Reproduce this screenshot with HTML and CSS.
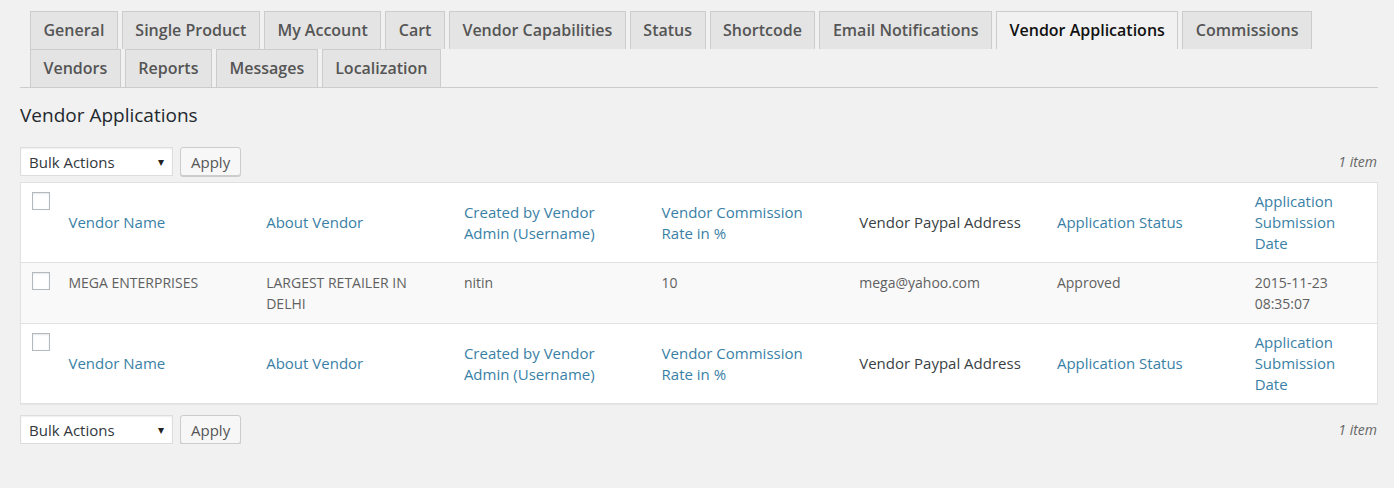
FILE: index.html
```html
<!DOCTYPE html>
<html lang="en">
<head>
    <meta charset="UTF-8">
    <title>Vendor Applications</title>
    <link rel="stylesheet" href="styles.css">
</head>
<body>
    <div class="wrap">
        <!-- settings tabs -->
        <nav class="nav-tabs">
            <a class="nav-tab" href="#">General</a>
            <a class="nav-tab" href="#">Single Product</a>
            <a class="nav-tab" href="#">My Account</a>
            <a class="nav-tab" href="#">Cart</a>
            <a class="nav-tab" href="#">Vendor Capabilities</a>
            <a class="nav-tab" href="#">Status</a>
            <a class="nav-tab" href="#">Shortcode</a>
            <a class="nav-tab" href="#">Email Notifications</a>
            <a class="nav-tab nav-tab-active" href="#">Vendor Applications</a>
            <a class="nav-tab" href="#">Commissions</a>
            <a class="nav-tab" href="#">Vendors</a>
            <a class="nav-tab" href="#">Reports</a>
            <a class="nav-tab" href="#">Messages</a>
            <a class="nav-tab" href="#">Localization</a>
        </nav>

        <h2 class="page-title">Vendor Applications</h2>

        <div class="tablenav top">
            <div class="bulk-actions">
                <div class="select">Bulk Actions <span class="arrow">&#9662;</span></div>
                <button type="button" class="button">Apply</button>
            </div>
            <span class="count">1 item</span>
        </div>

        <table class="list-table">
            <colgroup>
                <col class="col-check">
                <col class="col">
                <col class="col">
                <col class="col">
                <col class="col">
                <col class="col">
                <col class="col">
                <col>
            </colgroup>
            <thead>
                <tr>
                    <th class="check"><span class="checkbox"></span></th>
                    <th><a href="#">Vendor Name</a></th>
                    <th><a href="#">About Vendor</a></th>
                    <th><a href="#">Created by Vendor Admin (Username)</a></th>
                    <th><a href="#">Vendor Commission Rate in %</a></th>
                    <th>Vendor Paypal Address</th>
                    <th><a href="#">Application Status</a></th>
                    <th><a href="#">Application Submission Date</a></th>
                </tr>
            </thead>
            <tbody>
                <tr>
                    <td class="check"><span class="checkbox"></span></td>
                    <td>MEGA ENTERPRISES</td>
                    <td>LARGEST RETAILER IN DELHI</td>
                    <td>nitin</td>
                    <td>10</td>
                    <td>mega@yahoo.com</td>
                    <td>Approved</td>
                    <td>2015-11-23 08:35:07</td>
                </tr>
            </tbody>
            <tfoot>
                <tr>
                    <th class="check"><span class="checkbox"></span></th>
                    <th><a href="#">Vendor Name</a></th>
                    <th><a href="#">About Vendor</a></th>
                    <th><a href="#">Created by Vendor Admin (Username)</a></th>
                    <th><a href="#">Vendor Commission Rate in %</a></th>
                    <th>Vendor Paypal Address</th>
                    <th><a href="#">Application Status</a></th>
                    <th><a href="#">Application Submission Date</a></th>
                </tr>
            </tfoot>
        </table>

        <div class="tablenav bottom">
            <div class="bulk-actions">
                <div class="select">Bulk Actions <span class="arrow">&#9662;</span></div>
                <button type="button" class="button">Apply</button>
            </div>
            <span class="count">1 item</span>
        </div>
    </div>
</body>
</html>
```

FILE: styles.css
```css
/* page */
body {
    margin: 0;
    background-color: #f1f1f1;
    font-family: 'Open Sans', sans-serif;
    color: #444;
}

.wrap {
    padding: 11px 16px 0 20px;
}

/* tabs */
.nav-tabs {
    display: flex;
    flex-wrap: wrap;
    column-gap: 4px;
    padding-left: 10px;
    border-bottom: 1px solid #ccc;
}

.nav-tab {
    display: block;
    padding: 5px 12.5px;
    font-size: 16px;
    line-height: 27px;
    font-weight: 600;
    color: #555;
    text-decoration: none;
    background-color: #e4e4e4;
    border: 1px solid #ccc;
    border-bottom: none;
}

.nav-tab-active {
    background-color: #f1f1f1;
    color: #111;
}

/* title */
.page-title {
    margin: 14px 0 0;
    font-size: 19px;
    line-height: 26px;
    font-weight: 400;
    color: #23282d;
}

/* bulk actions bar */
.tablenav {
    display: flex;
    justify-content: space-between;
    align-items: center;
}

.tablenav.top {
    margin: 19px 0 6px;
}

.tablenav.bottom {
    margin: 11px 0 0;
}

.bulk-actions {
    display: flex;
    gap: 7px;
}

.select {
    box-sizing: border-box;
    width: 153px;
    height: 29px;
    padding: 0 8px;
    display: flex;
    justify-content: space-between;
    align-items: center;
    font-size: 15px;
    color: #32373c;
    background-color: #fff;
    border: 1px solid #ddd;
    box-shadow: inset 0 1px 2px rgba(0, 0, 0, 0.07);
}

.select .arrow {
    font-size: 12px;
    color: #222;
}

.button {
    box-sizing: border-box;
    height: 29px;
    padding: 0 10px;
    font-family: inherit;
    font-size: 15px;
    color: #555;
    background-color: #f7f7f7;
    border: 1px solid #ccc;
    border-radius: 3px;
    box-shadow: 0 1px 0 #ccc;
}

.count {
    font-size: 14px;
    font-style: italic;
    color: #666;
    padding-right: 1px;
}

/* table */
.list-table {
    width: 100%;
    border-collapse: collapse;
    table-layout: fixed;
    background-color: #fff;
    border: 1px solid #e1e1e1;
    box-shadow: 0 1px 1px rgba(0, 0, 0, 0.04);
}

.col-check {
    width: 38px;
}

.col {
    width: 197.7px;
}

.list-table th,
.list-table td {
    padding: 8px 24px 8px 10px;
    text-align: left;
    font-size: 15px;
    line-height: 21px;
    font-weight: 400;
}

.list-table th {
    vertical-align: middle;
    color: #3a3f44;
}

.list-table th a {
    color: #3a7fa6;
    text-decoration: none;
}

.list-table td {
    vertical-align: top;
    padding: 9px 24px 9px 10px;
    font-size: 14px;
    color: #606060;
}

.list-table tbody tr {
    background-color: #f9f9f9;
    border-top: 1px solid #e1e1e1;
    border-bottom: 1px solid #e1e1e1;
}

.list-table .check {
    vertical-align: top;
    padding: 9px 0 0 11px;
}

.checkbox {
    display: block;
    width: 16px;
    height: 16px;
    background-color: #fff;
    border: 1px solid #b4b9be;
    box-shadow: inset 0 1px 2px rgba(0, 0, 0, 0.1);
}
```
